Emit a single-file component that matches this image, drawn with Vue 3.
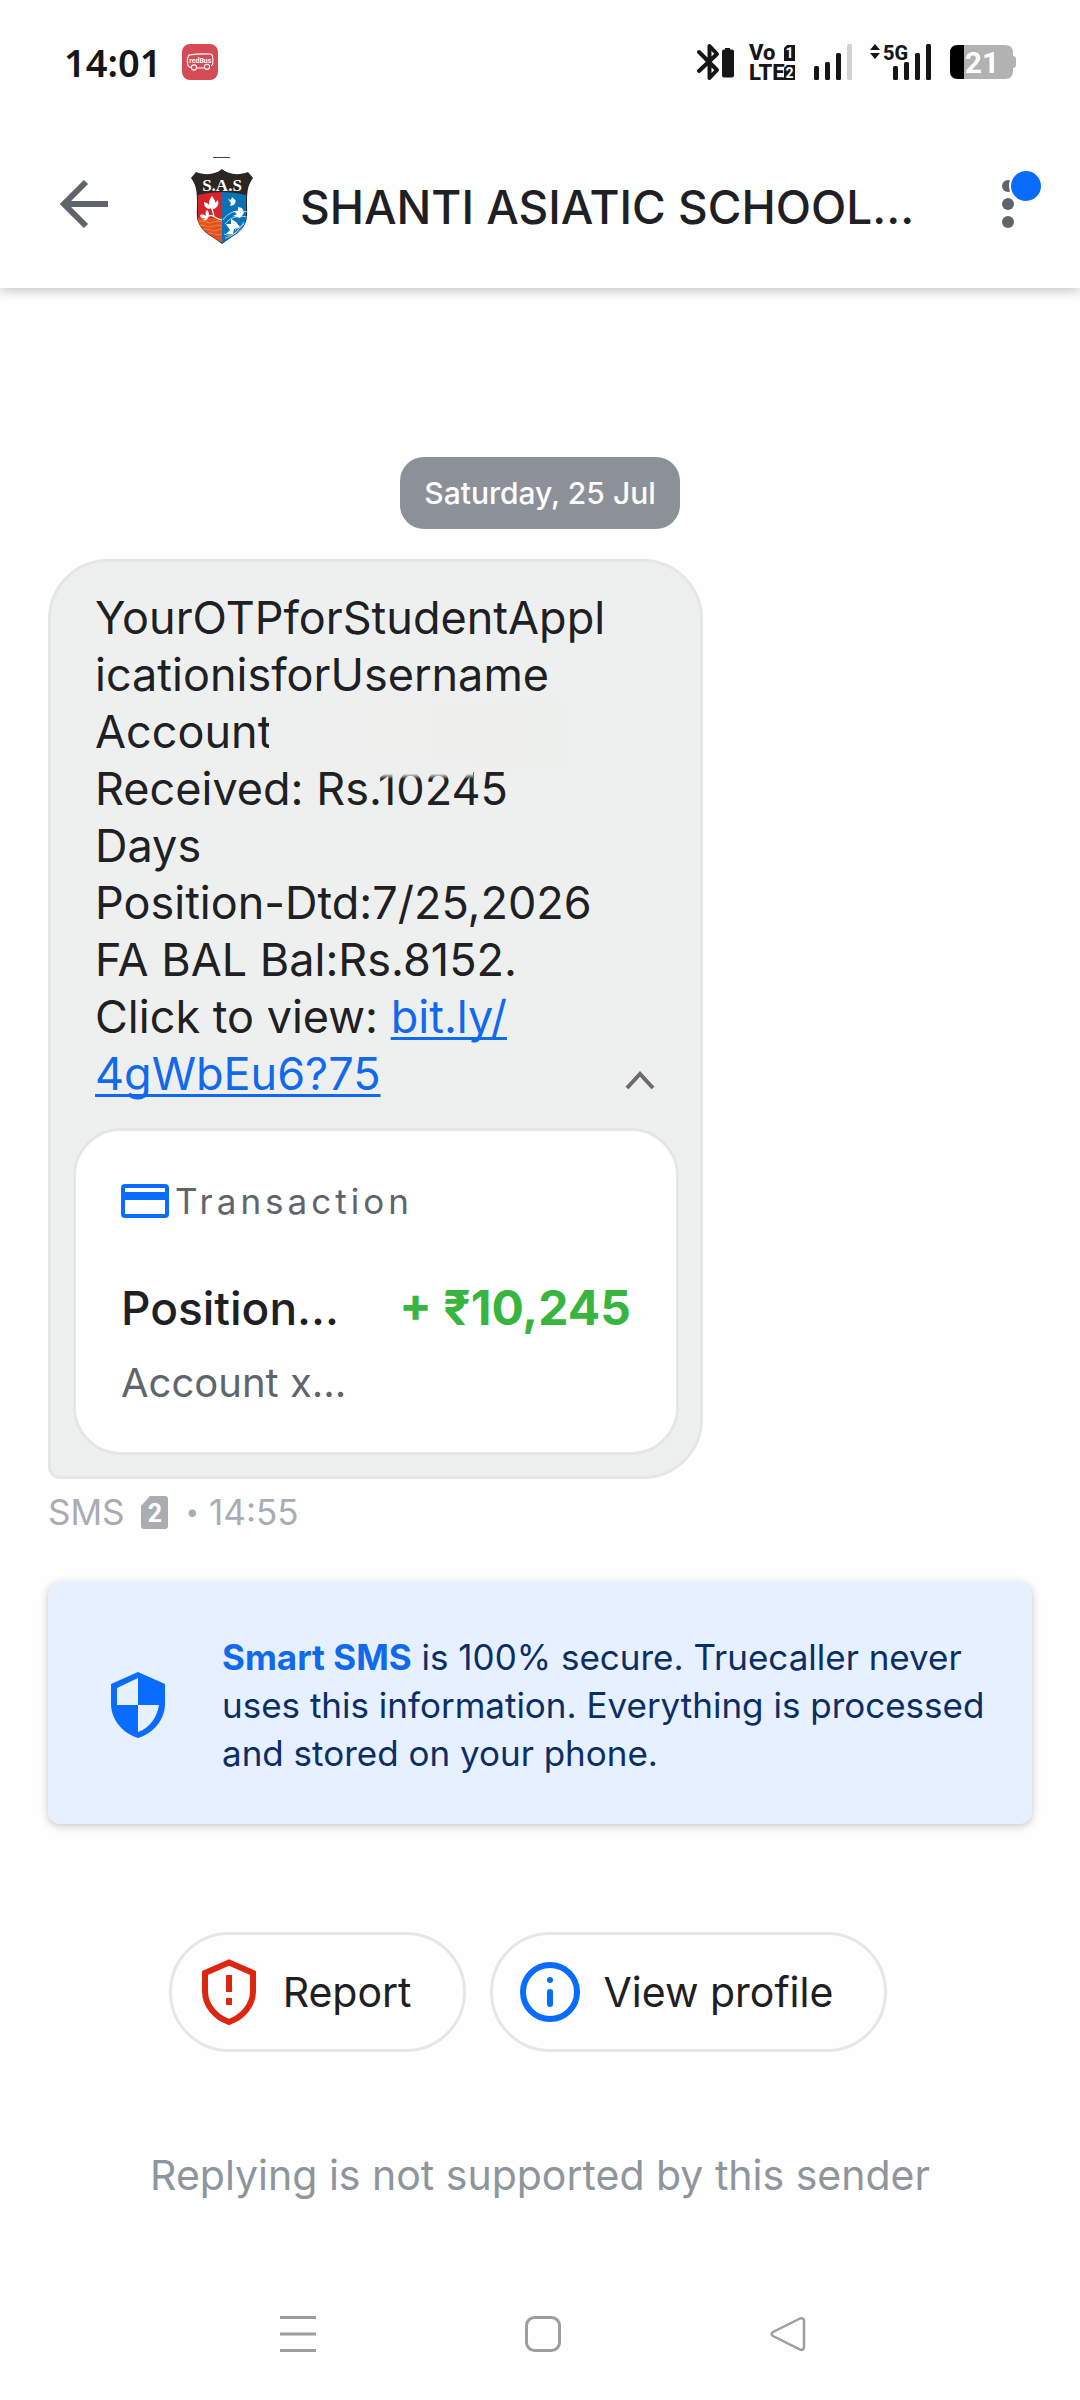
<script setup>
const messageLines = [
  'YourOTPforStudentAppl',
  'icationisforUsername',
  'Account',
  'Received: Rs.10245',
  'Days',
  'Position-Dtd:7/25,2026',
  'FA BAL Bal:Rs.8152.',
]
</script>

<template>
  <div class="screen">
    <div class="status">
      <div class="status-left">
        <span class="clock">14:01</span>
        <svg class="bus" width="36" height="36" viewBox="0 0 36 36">
          <rect width="36" height="36" rx="8" fill="#d54b55" />
          <path d="M6 21.500c-1-3-1-6 0-9 .3-1.200 1-1.500 2-1.600 7-1.100 13-1.200 20-.9 1.500 0 2.200.6 2.500 2 .6 3 .6 5.500.2 8-.2 1-.8 1.400-1.700 1.600M15 24h7M6 21.500c.4 1 1.500 1.800 3 2" fill="none" stroke="#fff" stroke-width="1.100" />
          <circle cx="12" cy="23.500" r="2.600" fill="none" stroke="#fff" stroke-width="1.100" />
          <circle cx="25" cy="22.800" r="2.600" fill="none" stroke="#fff" stroke-width="1.100" />
          <text x="18.300" y="18.600" text-anchor="middle" font-size="7" font-weight="600" fill="#fff">redBus</text>
        </svg>
      </div>
      <div class="status-right">
        <svg width="38" height="40" viewBox="0 0 38 40">
          <path d="M2 10 20 28 12.500 36V4L20 12 2 29" fill="none" stroke="#161616" stroke-width="4" stroke-linejoin="round" stroke-linecap="round" />
          <path d="M28 6h5v1.500h2q2 0 2 2v24q0 2-2 2h-8q-2 0-2-2v-24q0-2 2-2h1z" fill="#161616" />
        </svg>
        <svg class="volte" width="47" height="38" viewBox="0 0 47 38">
          <text x="0" y="17" font-size="22" font-weight="800" fill="#161616">Vo</text>
          <text x="0" y="37" font-size="22" font-weight="800" fill="#161616">LTE</text>
          <path d="M38 2h8v16H35V5zM38 22h8v15H35V25z" fill="#161616" />
          <text x="40.500" y="15" text-anchor="middle" font-size="14" font-weight="700" fill="#fff">1</text>
          <text x="40.500" y="34.500" text-anchor="middle" font-size="14" font-weight="700" fill="#fff">2</text>
        </svg>
        <svg class="bars" width="38" height="38" viewBox="0 0 38 38">
          <rect x="0" y="23" width="5" height="14" rx="1.500" fill="#161616" />
          <rect x="11" y="19" width="5" height="18" rx="1.500" fill="#161616" />
          <rect x="22" y="10" width="5" height="27" rx="1.500" fill="#161616" />
          <rect x="33" y="1" width="5" height="36" rx="1.500" fill="#d2d2d2" />
        </svg>
        <svg class="bars5g" width="62" height="38" viewBox="0 0 62 38">
          <path d="M0 7 5 1l5 6zM0 10h10l-5 6z" fill="#161616" />
          <text x="13" y="16.500" font-size="20" font-weight="800" fill="#161616">5G</text>
          <rect x="23" y="23" width="5" height="14" rx="1.500" fill="#161616" />
          <rect x="34" y="19" width="5" height="18" rx="1.500" fill="#161616" />
          <rect x="45" y="10" width="5" height="27" rx="1.500" fill="#161616" />
          <rect x="56" y="1" width="5" height="36" rx="1.500" fill="#161616" />
        </svg>
        <svg class="battery" width="66" height="34" viewBox="0 0 66 34">
          <path d="M8 0h47q8 0 8 8v3q3 0 3 3v6q0 3-3 3v3q0 8-8 8H8q-8 0-8-8V8q0-8 8-8z" fill="#b2b2b2" />
          <path d="M14 0H8Q0 0 0 8v18q0 8 8 8h6z" fill="#000" />
          <text x="32" y="28" text-anchor="middle" font-size="30" font-weight="700" fill="#fff">21</text>
        </svg>
      </div>
    </div>

    <header class="appbar">
      <button class="icon-btn" aria-label="Back">
        <svg width="48" height="48" viewBox="0 0 48 48">
          <path d="M48 24H4M26 2 4 24l22 22" fill="none" stroke="#5f646d" stroke-width="6" />
        </svg>
      </button>
      <svg class="crest" width="64" height="88" viewBox="0 0 64 88">
        <defs>
          <clipPath id="shield">
            <path d="M7 36h50c0 10 1 20-1 28-2 10-12 15-24 23C20 79 10 74 8 64 6 56 7 46 7 36z" />
          </clipPath>
        </defs>
        <rect x="23" y="1" width="17" height="1" fill="#444" />
        <path d="M32 13c6 5 16 7 26 3l5 6c-6 8-6 16-6 26 0 8 1 14-2 20-4 9-13 12-23 20C22 80 13 77 9 68c-3-6-2-12-2-20 0-10 0-18-6-26l5-6c10 4 20 2 26-3z" fill="#292624" />
        <g clip-path="url(#shield)">
          <path d="M8 39q12-3 24-3v26H8z" fill="#d9232b" />
          <path d="M8 62h24v25H8z" fill="#e4501f" />
          <path d="M32 36q12 0 24 3v48H32z" fill="#0a72b8" />
          <path d="M8 66q4-2 8 0t8 0 8 0M8 70q4-2 8 0t8 0 8 0M12 74q4-2 8 0t8 0 4 0M16 78q4-2 8 0t8 0" fill="none" stroke="#f08040" stroke-width="1" />
          <path d="M33 64c5-8 15-11 24-8M35 68c5-7 14-9 22-7M34 78c6 3 14 0 20-8M35 82c6-1 12-5 19-16M45 74c3-3 6-3 9-6" fill="none" stroke="#a9d5ee" stroke-width="1" />
        </g>
        <path d="M22 54c-3-3-4-6-2-11l2-3 2 3c3 5 1 9-2 11zM20 53c-4 0-6-3-6-7 4 1 6 3 6 7zM24 53c0-4 1-7 4-9 1 4 0 7-4 9zM16 62c-3 1-6 0-6-3 3-1 6 0 7 2-2-3-2-5 0-7 2 2 3 5 1 8-1 2-3 3-5 2z" fill="#fff" />
        <path d="M16 61c8-4 8 2 16 3M22 53l2 7" fill="none" stroke="#fff" stroke-width="1.200" />
        <path d="M38 43l3 1 1-3 4 4-2 4-4 1 1-3zM43 55l5 0 0-4 4 1 2 5-4 5-7-2 4-2zM36 68l5 0 0-5 5 3 4 5-6 2-1 5-7 0 4-4z" fill="#fff" />
        <text x="32" y="35" text-anchor="middle" class="crest-text">S.A.S</text>
      </svg>
      <h1 class="title">SHANTI ASIATIC SCHOOL...</h1>
      <button class="icon-btn more" aria-label="More options">
        <svg width="42" height="60" viewBox="0 0 42 60">
          <circle cx="6" cy="18" r="6" fill="#5f646d" />
          <circle cx="6" cy="36" r="6" fill="#5f646d" />
          <circle cx="6" cy="54" r="6" fill="#5f646d" />
          <circle cx="24" cy="18" r="17" fill="#fff" />
          <circle cx="24" cy="18" r="15" fill="#0a6cff" />
        </svg>
      </button>
    </header>

    <main class="thread">
      <div class="date">Saturday, 25 Jul</div>

      <article class="bubble">
        <div class="message">
          <p class="body">
            <span v-for="line in messageLines" :key="line" class="line">{{ line }}</span>
            <span class="line">Click to view: <a href="#">bit.ly/</a></span>
            <span class="line"><a href="#">4gWbEu6?75</a></span>
          </p>
          <span class="hidden-number"></span>
          <button class="collapse" aria-label="Collapse">
            <svg width="30" height="21" viewBox="0 0 30 21">
              <path d="M2 19 15 5l13 14" fill="none" stroke="#6b6b6b" stroke-width="4" />
            </svg>
          </button>
        </div>
        <section class="card">
          <div class="kind">
            <svg width="48" height="36" viewBox="0 0 48 36">
              <rect x="2" y="3" width="44" height="30" rx="2" fill="#fff" stroke="#0a6cff" stroke-width="4" />
              <rect x="2" y="9" width="44" height="8" fill="#0a6cff" />
            </svg>
            <span>Transaction</span>
          </div>
          <div class="entry">
            <span class="name">Position...</span>
            <span class="amount">+ ₹10,245</span>
          </div>
          <div class="account">Account x...</div>
        </section>
      </article>

      <div class="meta">
        <span>SMS</span>
        <svg class="sim" width="27" height="33" viewBox="0 0 27 33">
          <path d="M9 0h15q3 0 3 3v27q0 3-3 3H3q-3 0-3-3V10z" fill="#a9adb3" />
          <text x="14" y="26" text-anchor="middle" font-size="25" font-weight="700" fill="#fff">2</text>
        </svg>
        <span class="sep">•</span>
        <span>14:55</span>
      </div>

      <section class="notice">
        <svg width="54" height="66" viewBox="0 0 54 66">
          <path d="M27 0 54 12v20c0 15-11 29-27 34C11 61 0 47 0 32V12z" fill="#0a6cff" />
          <path d="M27 6v27H6V16zM27 33h21c-2 12-9 23-21 27z" fill="#e6f0ff" />
        </svg>
        <p><strong>Smart SMS</strong> is 100% secure. Truecaller never uses this information. Everything is processed and stored on your phone.</p>
      </section>

      <div class="actions">
        <button class="chip">
          <svg width="60" height="66" viewBox="0 0 60 66">
            <path d="M30 3.500 54 14v18c0 14-10 26-24 31C16 58 6 46 6 32V14z" fill="none" stroke="#dc2611" stroke-width="6" />
            <path d="M27 16h6v17h-6zM27 39h6v7h-6z" fill="#dc2611" />
          </svg>
          <span>Report</span>
        </button>
        <button class="chip">
          <svg width="60" height="60" viewBox="0 0 60 60">
            <circle cx="30" cy="30" r="27" fill="none" stroke="#0a6cff" stroke-width="6" />
            <circle cx="30" cy="18" r="3" fill="#0a6cff" />
            <rect x="27" y="27" width="6" height="18" rx="3" fill="#0a6cff" />
          </svg>
          <span>View profile</span>
        </button>
      </div>

      <p class="no-reply">Replying is not supported by this sender</p>
    </main>

    <nav class="sysnav">
      <button class="icon-btn" aria-label="Recent apps">
        <svg width="38" height="38" viewBox="0 0 38 38">
          <path d="M1 2.500h36M1 19h36M1 35.500h36" stroke="#9e9e9e" stroke-width="3" />
        </svg>
      </button>
      <button class="icon-btn" aria-label="Home">
        <svg width="38" height="38" viewBox="0 0 38 38">
          <rect x="2.500" y="2.500" width="33" height="33" rx="8" fill="none" stroke="#9e9e9e" stroke-width="3" />
        </svg>
      </button>
      <button class="icon-btn" aria-label="Back">
        <svg width="38" height="38" viewBox="0 0 38 38">
          <path d="M31 3.500 4 17q-3 2 0 4l27 13.500q4 1 4-2.500V6q0-3.500-4-2.500z" fill="none" stroke="#9e9e9e" stroke-width="2.500" />
        </svg>
      </button>
    </nav>
  </div>
</template>

<style>
body {
  margin: 0;
  background: #fefefe;
}
</style>

<style scoped>
.screen {
  min-height: 100vh;
  display: flex;
  flex-direction: column;
  background: #fefefe;
  color: #1e2023;
  font-family: Inter, Roboto, sans-serif;
}
svg {
  display: block;
  flex: none;
  overflow: visible;
  font-family: Roboto, sans-serif;
}
button {
  font: inherit;
  color: inherit;
  background: none;
  border: 0;
  padding: 0;
}
p,
h1 {
  margin: 0;
}
.status {
  position: relative;
  z-index: 1;
  display: flex;
  justify-content: space-between;
  align-items: center;
  height: 124px;
  padding: 0 64px;
  background: #fefefe;
}
.status-left,
.status-right {
  display: flex;
  align-items: center;
}
.clock {
  font-family: "Noto Sans", sans-serif;
  font-size: 38px;
  font-weight: 600;
  line-height: 48px;
  color: #161616;
}
.bus {
  margin-left: 21px;
}
.volte {
  margin-left: 14px;
}
.bars,
.bars5g,
.battery {
  margin-left: 18px;
}
.appbar {
  display: flex;
  align-items: center;
  height: 164px;
  padding: 0 36px 4px 60px;
  box-sizing: border-box;
  box-shadow: 0 2px 12px rgba(0, 0, 0, 0.26);
}
.crest {
  margin: 0 46px 8px 82px;
}
.crest-text {
  font-family: "Liberation Serif", serif;
  font-size: 17px;
  font-weight: 700;
  fill: #fff;
}
.title {
  flex: 1;
  padding-top: 6px;
  font-size: 46px;
  font-weight: 500;
  line-height: 60px;
}
.more {
  padding-bottom: 12px;
}
.thread {
  flex: 1;
  display: flex;
  flex-direction: column;
  padding: 169px 48px 0;
}
.date {
  align-self: center;
  padding: 0 24px;
  border-radius: 24px;
  background: #8c9199;
  color: #fff;
  font-size: 30px;
  font-weight: 500;
  line-height: 72px;
}
.bubble {
  align-self: flex-start;
  width: 655px;
  max-width: 100%;
  box-sizing: border-box;
  margin-top: 30px;
  padding: 27px 21px 21px 22px;
  border: 3px solid #e5e7e7;
  border-radius: 60px 60px 60px 12px;
  background: #eef0f0;
}
.message {
  position: relative;
  padding: 0 22px 26px;
}
.body {
  font-size: 45px;
  line-height: 57px;
}
.line {
  display: block;
}
.body a {
  color: #1169ec;
  text-decoration-line: underline;
  text-decoration-thickness: 3px;
  text-decoration-skip-ink: none;
  text-underline-offset: 4px;
}
.hidden-number {
  position: absolute;
  left: 196px;
  top: 112px;
  width: 300px;
  height: 66px;
  border-radius: 12px;
  background: linear-gradient(90deg, #eef0f0, #eff0ee 40%, #edefed);
}
.hidden-number::after {
  content: "";
  position: absolute;
  left: 110px;
  top: 60px;
  width: 94px;
  height: 18px;
  background: linear-gradient(#eef0ef 70%, #eef0f000);
}
.collapse {
  position: absolute;
  right: 24px;
  bottom: 38px;
}
.card {
  padding: 49px 45px 42px;
  border: 3px solid #e5e7e7;
  border-radius: 48px;
  background: #fff;
}
.kind {
  display: flex;
  align-items: center;
  gap: 6px;
  font-size: 35px;
  line-height: 42px;
  letter-spacing: 4px;
  color: #5f646d;
}
.entry {
  display: flex;
  justify-content: space-between;
  margin-top: 56px;
  line-height: 60px;
}
.name {
  font-size: 46px;
  font-weight: 500;
}
.amount {
  font-size: 48px;
  font-weight: 700;
  color: #38b53f;
}
.account {
  margin-top: 18px;
  font-size: 40px;
  line-height: 54px;
  color: #5f646d;
}
.meta {
  display: flex;
  align-items: center;
  margin-top: 12px;
  font-size: 35px;
  line-height: 42px;
  color: #a9adb3;
}
.sim {
  margin: 0 18px 0 16px;
}
.sep {
  margin-right: 10px;
  font-size: 24px;
}
.notice {
  display: flex;
  align-items: center;
  gap: 57px;
  margin-top: 49px;
  padding: 51px 36px 47px 63px;
  border-radius: 12px;
  background: #e6f0ff;
  color: #0b2e66;
  box-shadow: 0 2px 8px rgba(0, 0, 0, 0.22);
  font-size: 35px;
  line-height: 48px;
}
.notice strong {
  color: #1169ec;
}
.actions {
  display: flex;
  justify-content: center;
  gap: 24px;
  margin-top: 108px;
  padding-right: 24px;
}
.chip {
  display: flex;
  align-items: center;
  gap: 24px;
  height: 120px;
  padding: 0 51px 0 27px;
  border: 3px solid #e5e7e7;
  border-radius: 60px;
  font-size: 41px;
}
.no-reply {
  margin-top: 96px;
  text-align: center;
  font-size: 41px;
  line-height: 54px;
  color: #8f959c;
}
.sysnav {
  display: flex;
  justify-content: center;
  gap: 207px;
  padding: 0 0 47px 5px;
}
</style>
